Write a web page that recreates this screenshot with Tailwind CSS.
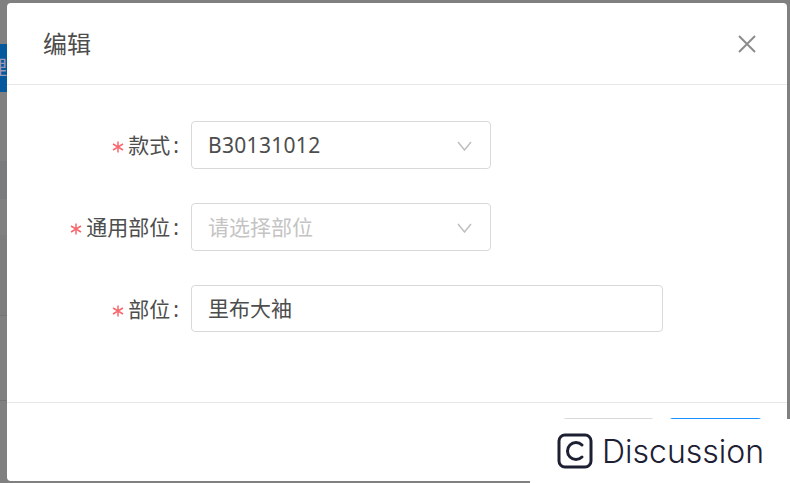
<!DOCTYPE html>
<html lang="zh">
  <head>
    <meta charset="UTF-8" />
    <title>编辑</title>
    <script src="https://cdn.jsdelivr.net/npm/@tailwindcss/browser@4"></script>
  </head>
  <body class="relative w-[790px] h-[483px] overflow-hidden bg-[#808080] font-['Noto_Sans','Noto_Sans_CJK_SC',sans-serif]">
    <!-- page behind the mask -->
    <div class="flex flex-col w-[7px] h-full overflow-hidden">
      <div class="h-[44px] shrink-0"></div>
      <div class="h-[48px] shrink-0 bg-[#03599c] text-[#9a9ab5] text-[20px] leading-[48px] w-[7px] overflow-hidden"><span class="block w-[20px] -ml-[13px]">理</span></div>
      <div class="h-[69px] shrink-0"></div>
      <div class="h-[38px] shrink-0 bg-[#797b7d]"></div>
      <div class="h-[36px] shrink-0"></div>
      <div class="h-[81px] shrink-0 bg-[#7d7d7d] border-b border-[#747474]"></div>
      <div class="h-[85px] shrink-0 border-b border-[#747474]"></div>
    </div>

    <!-- modal -->
    <div class="absolute left-[7px] top-[3px] w-[780px] h-[478px] bg-white rounded-[4px] flex flex-col overflow-hidden">
      <div class="h-[82px] shrink-0 border-b border-[#e8e8e8] flex items-center justify-between pl-[36px] pr-[30px]">
        <span class="text-[24px] leading-[32px] text-[#4d4d4d]">编辑</span>
        <svg width="20" height="20" viewBox="0 0 20 20" fill="none" stroke="#8c8c8c" stroke-width="2"><path d="M2 2 L18 18 M18 2 L2 18" /></svg>
      </div>

      <div class="h-[317px] shrink-0 pt-[36px] flex flex-col gap-[34px]">
        <div class="flex items-center h-[48px]">
          <label class="w-[184px] pr-[12px] pt-[2px] flex justify-end items-center text-[21px] text-[#4d4d4d]"><svg class="mr-[4px] mt-[2px]" width="12" height="12" viewBox="0 0 12 12" fill="none" stroke="#f7686f" stroke-width="1.5"><path d="M6 .5 V11.5 M1 3 L11 9 M11 3 L1 9" /></svg>款式<span class="ml-[3px]">:</span></label>
          <div class="w-[300px] h-[48px] border border-[#d9d9d9] rounded-[4px] flex items-center justify-between pl-[16px] pr-[18px] pt-[1px] text-[21px] text-[#4d4d4d] tracking-[0.3px]">
            B30131012
            <svg width="15" height="10" viewBox="0 0 15 10" fill="none" stroke="#bfbfbf" stroke-width="1.5"><path d="M1 1 L7.5 9 L14 1" /></svg>
          </div>
        </div>
        <div class="flex items-center h-[48px]">
          <label class="w-[184px] pr-[12px] pt-[2px] flex justify-end items-center text-[21px] text-[#4d4d4d]"><svg class="mr-[4px] mt-[2px]" width="12" height="12" viewBox="0 0 12 12" fill="none" stroke="#f7686f" stroke-width="1.5"><path d="M6 .5 V11.5 M1 3 L11 9 M11 3 L1 9" /></svg>通用部位<span class="ml-[3px]">:</span></label>
          <div class="w-[300px] h-[48px] border border-[#d9d9d9] rounded-[4px] flex items-center justify-between pl-[16px] pr-[18px] pt-[1px] text-[21px] text-[#c4c4c4]">
            请选择部位
            <svg width="15" height="10" viewBox="0 0 15 10" fill="none" stroke="#bfbfbf" stroke-width="1.5"><path d="M1 1 L7.5 9 L14 1" /></svg>
          </div>
        </div>
        <div class="flex items-center h-[47px]">
          <label class="w-[184px] pr-[12px] pt-[2px] flex justify-end items-center text-[21px] text-[#4d4d4d]"><svg class="mr-[4px] mt-[2px]" width="12" height="12" viewBox="0 0 12 12" fill="none" stroke="#f7686f" stroke-width="1.5"><path d="M6 .5 V11.5 M1 3 L11 9 M11 3 L1 9" /></svg>部位<span class="ml-[3px]">:</span></label>
          <div class="w-[472px] h-[47px] border border-[#d9d9d9] rounded-[4px] flex items-center pl-[16px] pt-[1px] text-[21px] text-[#4d4d4d]">里布大袖</div>
        </div>
      </div>

      <div class="flex-1 border-t border-[#e8e8e8] flex justify-end gap-[14px] pt-[15px] pr-[25px]">
        <div class="w-[93px] h-[48px] border border-[#d9d9d9] rounded-[4px]"></div>
        <div class="w-[93px] h-[48px] bg-[#1890ff] rounded-[4px]"></div>
      </div>
    </div>

    <!-- watermark over the corner -->
    <div class="absolute right-0 bottom-0 w-[260px] h-[64px] bg-white flex items-center pl-[27px] gap-[9px] text-[#1d2033]">
      <svg width="36" height="36" viewBox="0 0 36 36" fill="none" stroke="#1d2033" stroke-width="3">
        <rect x="2" y="2" width="32" height="32" rx="6" />
        <path d="M25 12 A8.5 8.5 0 1 0 25 24" stroke-linecap="round" />
      </svg>
      <span class="font-['Inter',sans-serif] font-light text-[32px] leading-none pt-[1px]">Discussion</span>
    </div>
  </body>
</html>
